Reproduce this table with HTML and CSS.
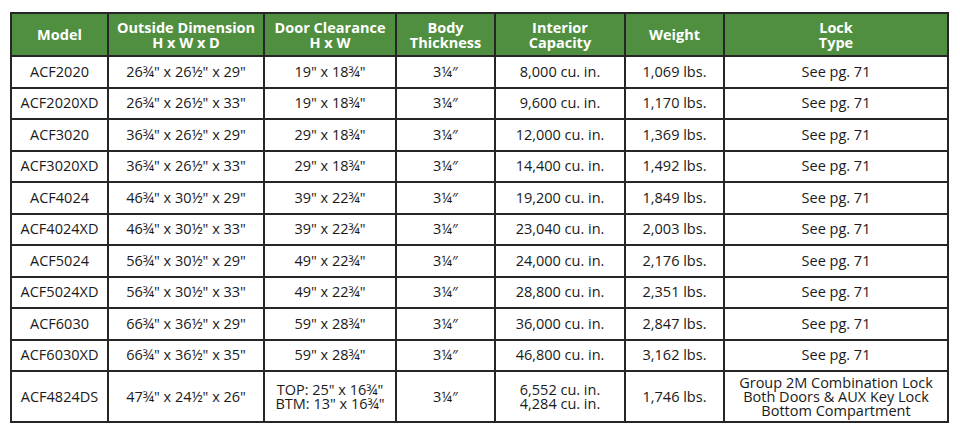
FILE: index.html
```html
<!DOCTYPE html>
<html>
<head>
<meta charset="utf-8">
<link rel="stylesheet" href="styles.css">
</head>
<body>
<div class="wrap">
<table class="spec">
<colgroup>
<col class="c1"><col class="c2"><col class="c3"><col class="c4"><col class="c5"><col class="c6"><col class="c7">
</colgroup>
<thead>
<tr><th>Model</th><th>Outside Dimension<br>H x W x D</th><th>Door Clearance<br>H x W</th><th>Body<br>Thickness</th><th>Interior<br>Capacity</th><th>Weight</th><th>Lock<br>Type</th></tr>
</thead>
<tbody>
<tr><td>ACF2020</td><td>26¾" x 26½" x 29"</td><td>19" x 18¾"</td><td>3¼″</td><td>8,000 cu. in.</td><td>1,069 lbs.</td><td>See pg. 71</td></tr>
<tr><td>ACF2020XD</td><td>26¾" x 26½" x 33"</td><td>19" x 18¾"</td><td>3¼″</td><td>9,600 cu. in.</td><td>1,170 lbs.</td><td>See pg. 71</td></tr>
<tr><td>ACF3020</td><td>36¾" x 26½" x 29"</td><td>29" x 18¾"</td><td>3¼″</td><td>12,000 cu. in.</td><td>1,369 lbs.</td><td>See pg. 71</td></tr>
<tr><td>ACF3020XD</td><td>36¾" x 26½" x 33"</td><td>29" x 18¾"</td><td>3¼″</td><td>14,400 cu. in.</td><td>1,492 lbs.</td><td>See pg. 71</td></tr>
<tr><td>ACF4024</td><td>46¾" x 30½" x 29"</td><td>39" x 22¾"</td><td>3¼″</td><td>19,200 cu. in.</td><td>1,849 lbs.</td><td>See pg. 71</td></tr>
<tr><td>ACF4024XD</td><td>46¾" x 30½" x 33"</td><td>39" x 22¾"</td><td>3¼″</td><td>23,040 cu. in.</td><td>2,003 lbs.</td><td>See pg. 71</td></tr>
<tr><td>ACF5024</td><td>56¾" x 30½" x 29"</td><td>49" x 22¾"</td><td>3¼″</td><td>24,000 cu. in.</td><td>2,176 lbs.</td><td>See pg. 71</td></tr>
<tr><td>ACF5024XD</td><td>56¾" x 30½" x 33"</td><td>49" x 22¾"</td><td>3¼″</td><td>28,800 cu. in.</td><td>2,351 lbs.</td><td>See pg. 71</td></tr>
<tr><td>ACF6030</td><td>66¾" x 36½" x 29"</td><td>59" x 28¾"</td><td>3¼″</td><td>36,000 cu. in.</td><td>2,847 lbs.</td><td>See pg. 71</td></tr>
<tr><td>ACF6030XD</td><td>66¾" x 36½" x 35"</td><td>59" x 28¾"</td><td>3¼″</td><td>46,800 cu. in.</td><td>3,162 lbs.</td><td>See pg. 71</td></tr>
<tr class="tall"><td>ACF4824DS</td><td>47¾" x 24½" x 26"</td><td class="multi">TOP: 25" x 16¾"<br>BTM: 13" x 16¾"</td><td>3¼″</td><td class="multi">6,552 cu. in.<br>4,284 cu. in.</td><td>1,746 lbs.</td><td class="multi">Group 2M Combination Lock<br>Both Doors &amp; AUX Key Lock<br>Bottom Compartment</td></tr>
</tbody>
</table>
</div>
</body>
</html>
```
FILE: styles.css
```css
html, body {
  margin: 0;
  padding: 0;
  background: #ffffff;
}
.wrap {
  padding: 12px 0 0 10px;
}
.spec {
  border-collapse: collapse;
  width: 937px;
  table-layout: fixed;
  font-family: "Open Sans", "DejaVu Sans", sans-serif;
  color: #1a1a1a;
}
.c1 { width: 97px; }
.c2 { width: 156px; }
.c3 { width: 132px; }
.c4 { width: 99px; }
.c5 { width: 130px; }
.c6 { width: 99px; }
.c7 { width: 224px; }
.spec th, .spec td {
  border: 2px solid #262626;
  text-align: center;
  vertical-align: middle;
  padding: 0;
}
.spec th {
  background: #4f8f3f;
  color: #ffffff;
  font-weight: 700;
  font-size: 14.5px;
  line-height: 15px;
  height: 41px;
}
.spec td {
  font-size: 14.5px;
  line-height: 14px;
  height: 29.5px;
}
.spec tr.tall td {
  height: 49px;
}
.spec td.multi {
  line-height: 14px;
}
```
